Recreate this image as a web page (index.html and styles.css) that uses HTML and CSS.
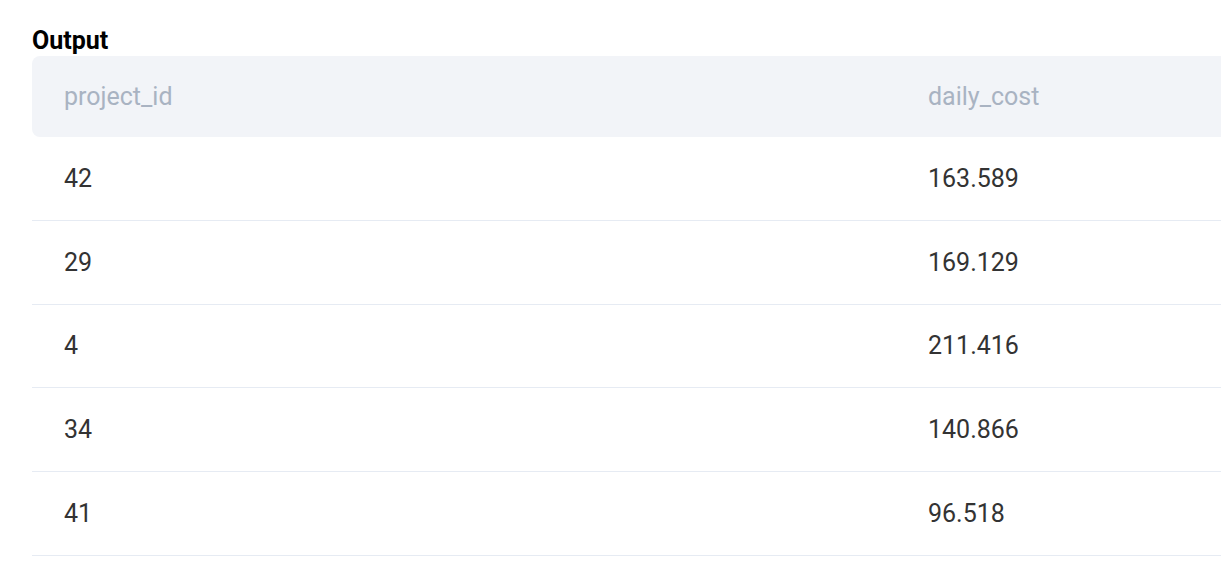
FILE: index.html
```html
<!DOCTYPE html>
<html>
<head>
<meta charset="utf-8">
<link rel="stylesheet" href="styles.css">
</head>
<body>
<div class="page">
  <div class="title">Output</div>
  <table class="result">
    <thead>
      <tr><th class="c1">project_id</th><th class="c2">daily_cost</th></tr>
    </thead>
    <tbody>
      <tr><td>42</td><td>163.589</td></tr>
      <tr><td>29</td><td>169.129</td></tr>
      <tr><td>4</td><td>211.416</td></tr>
      <tr><td>34</td><td>140.866</td></tr>
      <tr><td>41</td><td>96.518</td></tr>
    </tbody>
  </table>
</div>
</body>
</html>
```
FILE: styles.css
```css
html, body {
  margin: 0;
  padding: 0;
  background: #ffffff;
  overflow: hidden;
}
.page {
  padding: 26px 0 0 32px;
  font-family: Roboto, "Liberation Sans", sans-serif;
}
.title {
  font-size: 25px;
  line-height: 30px;
  font-weight: 700;
  color: #000000;
}
.result {
  border-collapse: separate;
  border-spacing: 0;
  width: 100%;
  font-size: 25px;
}
.result th {
  background: #f2f4f8;
  color: #a9b3c2;
  font-weight: 400;
  text-align: left;
  height: 81px;
  padding: 0 32px;
  box-sizing: border-box;
  vertical-align: middle;
}
.result th.c1 {
  width: 864px;
  border-radius: 8px 0 0 8px;
}
.result td {
  color: #333333;
  height: 83.75px;
  padding: 0 32px;
  box-sizing: border-box;
  border-bottom: 1px solid #e6ebf3;
  vertical-align: middle;
}
```
